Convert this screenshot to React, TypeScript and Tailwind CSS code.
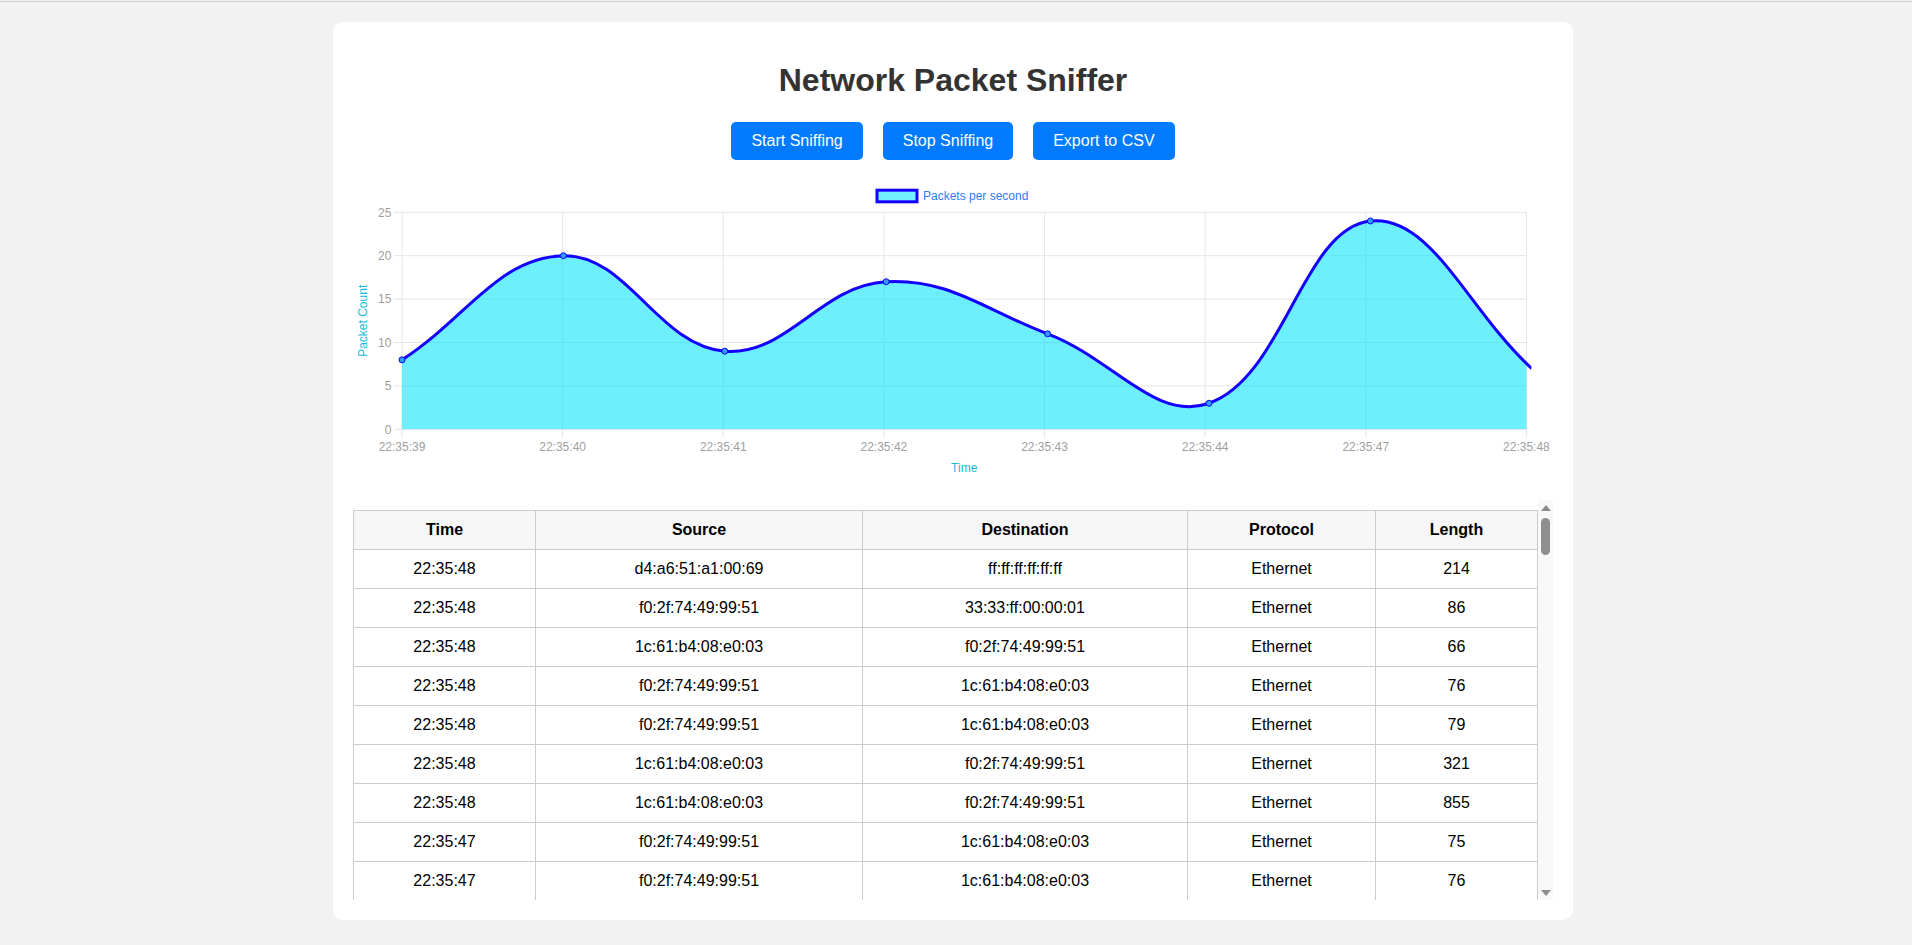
import React from "react";

const FONT = '"Liberation Sans", Arial, Helvetica, sans-serif';

const labels = ["22:35:39", "22:35:40", "22:35:41", "22:35:42", "22:35:43", "22:35:44", "22:35:47", "22:35:48"];
const values = [8, 20, 9, 17, 11, 3, 24, 7];

const LEFT = 49;
const RIGHT = 1173.4;
const TOP = 32.3;
const BOTTOM = 249.3;
const UNIT = (BOTTOM - TOP) / 25;
const GRID_DX = (RIGHT - LEFT) / 7;
const PT_DX = 161.4;

type P = { x: number; y: number };

function buildPaths() {
  const pts: P[] = values.map((v, i) => ({ x: LEFT + i * PT_DX, y: BOTTOM - v * UNIT }));
  const t = 0.4;
  const ctrl = pts.map((p, i) => {
    const prev = pts[i - 1] ?? p;
    const next = pts[i + 1] ?? p;
    const d01 = Math.hypot(p.x - prev.x, p.y - prev.y);
    const d12 = Math.hypot(next.x - p.x, next.y - p.y);
    let s01 = d01 / (d01 + d12);
    let s12 = d12 / (d01 + d12);
    if (isNaN(s01)) s01 = 0;
    if (isNaN(s12)) s12 = 0;
    const fa = t * s01;
    const fb = t * s12;
    const clampY = (y: number) => Math.min(BOTTOM, Math.max(TOP, y));
    return {
      c1: { x: p.x - fa * (next.x - prev.x), y: clampY(p.y - fa * (next.y - prev.y)) },
      c2: { x: p.x + fb * (next.x - prev.x), y: clampY(p.y + fb * (next.y - prev.y)) },
    };
  });
  let d = `M ${pts[0].x} ${pts[0].y}`;
  for (let i = 1; i < pts.length; i++) {
    const a = ctrl[i - 1].c2;
    const b = ctrl[i].c1;
    d += ` C ${a.x} ${a.y} ${b.x} ${b.y} ${pts[i].x} ${pts[i].y}`;
  }
  const last = pts[pts.length - 1];
  const fill = `${d} L ${last.x} ${BOTTOM} L ${pts[0].x} ${BOTTOM} Z`;
  return { pts, line: d, fill };
}

function Chart() {
  const { pts, line, fill } = buildPaths();
  const grid = "#e5e5e5";
  const tick = "#a0a0a0";
  const cyan = "#12bcd8";
  return (
    <svg width={1200} height={300} viewBox="0 0 1200 300" style={{ fontFamily: FONT }} className="block">
      <defs>
        <clipPath id="plotClip">
          <rect x={LEFT} y={TOP - 2} width={RIGHT - LEFT} height={BOTTOM - TOP + 2} />
        </clipPath>
        <clipPath id="lineClip">
          <rect x={LEFT - 5} y={TOP - 5} width={RIGHT - LEFT + 10} height={BOTTOM - TOP + 10} />
        </clipPath>
      </defs>
      {/* legend */}
      <rect x={524} y={10.2} width={40} height={11.6} fill="#72f0ff" stroke="#1400ff" strokeWidth={3} />
      <text x={570} y={20.2} fontSize={12} fill="#2b7cf5">Packets per second</text>

      {/* horizontal grid */}
      {[0, 5, 10, 15, 20, 25].map((v) => {
        const y = BOTTOM - v * UNIT;
        return (
          <g key={v}>
            <line x1={LEFT - 8} x2={RIGHT} y1={y} y2={y} stroke={grid} strokeWidth={1} />
            <text x={38.4} y={y + 4.2} fontSize={12} fill={tick} textAnchor="end">{v}</text>
          </g>
        );
      })}
      {/* vertical grid */}
      {labels.map((l, i) => {
        const x = LEFT + i * GRID_DX;
        return (
          <g key={l}>
            <line x1={x} x2={x} y1={TOP} y2={BOTTOM + 8} stroke={grid} strokeWidth={1} />
            <text x={x} y={270.9} fontSize={12} fill={tick} textAnchor="middle">{l}</text>
          </g>
        );
      })}

      {/* axis titles */}
      <text x={611.2} y={291.5} fontSize={12} fill={cyan} textAnchor="middle">Time</text>
      <text
        x={0}
        y={0}
        fontSize={12}
        fill={cyan}
        textAnchor="middle"
        transform={`translate(14.3 ${(TOP + BOTTOM) / 2}) rotate(-90)`}
      >
        Packet Count
      </text>

      {/* data */}
      <path d={fill} fill="rgba(0,226,252,0.57)" clipPath="url(#plotClip)" />
      <path d={line} fill="none" stroke="#1400ff" strokeWidth={3} clipPath="url(#lineClip)" />
      {pts.slice(0, 7).map((p, i) => (
        <circle key={i} cx={p.x} cy={p.y} r={3} fill="#2e9cf5" stroke="#1400ff" strokeWidth={1} />
      ))}
    </svg>
  );
}

const rows: [string, string, string, string, string][] = [
  ["22:35:48", "d4:a6:51:a1:00:69", "ff:ff:ff:ff:ff:ff", "Ethernet", "214"],
  ["22:35:48", "f0:2f:74:49:99:51", "33:33:ff:00:00:01", "Ethernet", "86"],
  ["22:35:48", "1c:61:b4:08:e0:03", "f0:2f:74:49:99:51", "Ethernet", "66"],
  ["22:35:48", "f0:2f:74:49:99:51", "1c:61:b4:08:e0:03", "Ethernet", "76"],
  ["22:35:48", "f0:2f:74:49:99:51", "1c:61:b4:08:e0:03", "Ethernet", "79"],
  ["22:35:48", "1c:61:b4:08:e0:03", "f0:2f:74:49:99:51", "Ethernet", "321"],
  ["22:35:48", "1c:61:b4:08:e0:03", "f0:2f:74:49:99:51", "Ethernet", "855"],
  ["22:35:47", "f0:2f:74:49:99:51", "1c:61:b4:08:e0:03", "Ethernet", "75"],
  ["22:35:47", "f0:2f:74:49:99:51", "1c:61:b4:08:e0:03", "Ethernet", "76"],
];

function Scrollbar() {
  return (
    <div className="flex w-[15px] shrink-0 flex-col bg-[#f9f9f9]">
      <div className="flex h-[15px] items-center justify-center">
        <svg width="10" height="6" viewBox="0 0 10 6">
          <polygon points="5,0 10,6 0,6" fill="#8d8d8d" />
        </svg>
      </div>
      <div className="flex flex-1 flex-col items-center pt-[3px]">
        <div className="h-[37px] w-[9px] rounded-full bg-[#8f8f8f]" />
      </div>
      <div className="flex h-[15px] items-center justify-center">
        <svg width="10" height="6" viewBox="0 0 10 6">
          <polygon points="0,0 10,0 5,6" fill="#8d8d8d" />
        </svg>
      </div>
    </div>
  );
}

export default function App() {
  const btn = "mx-[10px] rounded-[5px] bg-[#007bff] px-[20px] py-[10px] text-[16px] leading-[18px] text-white";
  const th = "border border-[#cccccc] bg-[#f6f6f6] px-[10px] py-[10px] text-center text-[16px] leading-[18px] font-bold text-black";
  const td = "border border-[#cccccc] px-[10px] py-[10px] text-center text-[16px] leading-[18px] text-black";
  return (
    <div className="min-h-screen bg-[#f2f2f2]" style={{ fontFamily: FONT }}>
      <div className="h-px bg-[#f2f2f2]" />
      <div className="h-px bg-[#cfcfcf]" />
      <div className="flex justify-center pr-[6px] pt-[20px] pb-[20px]">
        <div className="w-[1240px] rounded-[10px] bg-white p-[20px]">
          <h1 className="mt-[20px] mb-[23px] text-center text-[32px] leading-[37px] font-bold text-[#333333]">
            Network Packet Sniffer
          </h1>
          <div className="mb-[20px] flex justify-center">
            <button className={btn}>Start Sniffing</button>
            <button className={btn}>Stop Sniffing</button>
            <button className={btn}>Export to CSV</button>
          </div>
          <Chart />
          <div className="mt-[20px] flex h-[400px] overflow-hidden">
            <div className="min-w-0 flex-1 overflow-hidden">
              <table className="mt-[10px] w-full table-fixed border-collapse">
                <colgroup>
                  <col className="w-[182px]" />
                  <col className="w-[327px]" />
                  <col className="w-[325px]" />
                  <col className="w-[188px]" />
                  <col />
                </colgroup>
                <thead>
                  <tr>
                    <th className={th}>Time</th>
                    <th className={th}>Source</th>
                    <th className={th}>Destination</th>
                    <th className={th}>Protocol</th>
                    <th className={th}>Length</th>
                  </tr>
                </thead>
                <tbody>
                  {rows.map((r, i) => (
                    <tr key={i}>
                      {r.map((c, j) => (
                        <td key={j} className={td}>{c}</td>
                      ))}
                    </tr>
                  ))}
                </tbody>
              </table>
            </div>
            <Scrollbar />
          </div>
        </div>
      </div>
    </div>
  );
}
